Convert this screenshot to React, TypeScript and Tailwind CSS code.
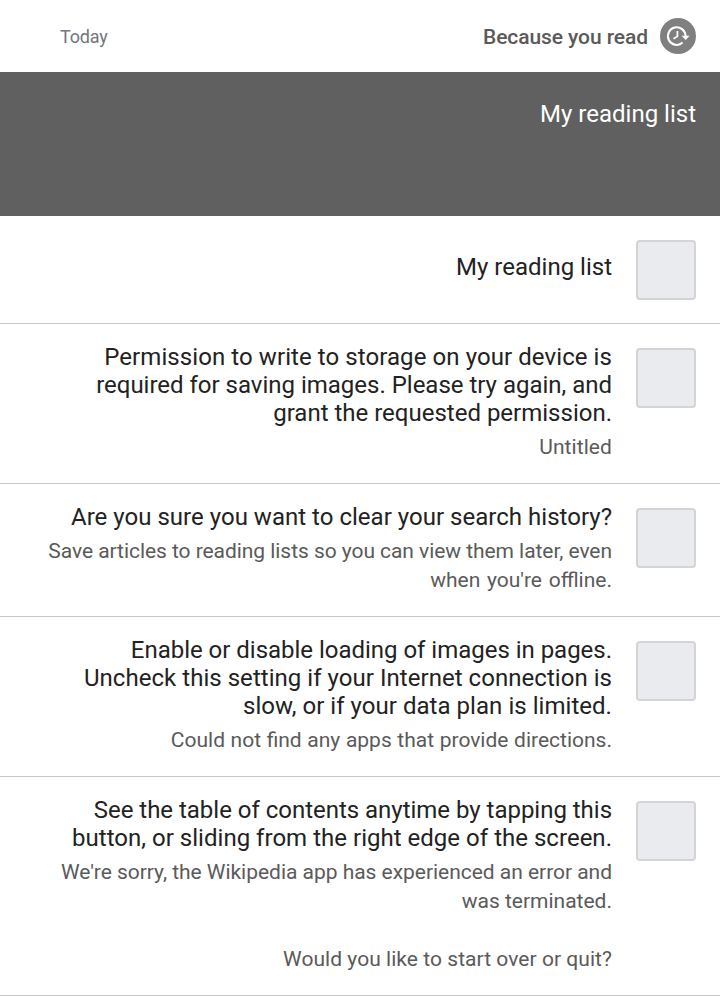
import React from "react";

type Line = [text: string, spacing: string];
type Item = { height: string; title: Line[]; details: Line[] };

const items: Item[] = [
  {
    height: "h-[108px] pt-[37px]",
    title: [["My reading list", ""]],
    details: [],
  },
  {
    height: "h-[160px] pt-[19px]",
    title: [
      ["Permission to write to storage on your device is", "tracking-[0.08px]"],
      ["required for saving images. Please try again, and", "tracking-[-0.01px]"],
      ["grant the requested permission.", ""],
    ],
    details: [["Untitled", "tracking-[0.08px]"]],
  },
  {
    height: "h-[133px] pt-[19px]",
    title: [["Are you sure you want to clear your search history?", "tracking-[0.02px]"]],
    details: [
      ["Save articles to reading lists so you can view them later, even", "tracking-[-0.056px]"],
      ["when you're offline.", "[word-spacing:1.5px]"],
    ],
  },
  {
    height: "h-[160px] pt-[19px]",
    title: [
      ["Enable or disable loading of images in pages.", "tracking-[-0.02px]"],
      ["Uncheck this setting if your Internet connection is", "tracking-[0.04px]"],
      ["slow, or if your data plan is limited.", "tracking-[0.04px]"],
    ],
    details: [["Could not find any apps that provide directions.", "[word-spacing:0.4px]"]],
  },
  {
    height: "h-[219px] pt-[19px]",
    title: [
      ["See the table of contents anytime by tapping this", "tracking-[-0.02px]"],
      ["button, or sliding from the right edge of the screen.", "tracking-[0.02px]"],
    ],
    details: [
      ["We're sorry, the Wikipedia app has experienced an error and", "tracking-[-0.03px]"],
      ["was terminated.", ""],
      ["\u00a0", ""],
      ["Would you like to start over or quit?", "tracking-[0.045px]"],
    ],
  },
];

function Lines({ lines }: { lines: Line[] }) {
  return lines.map(([text, spacing]) => (
    <span key={text} className={`block ${spacing}`}>{text}</span>
  ));
}

export default function App() {
  return (
    <main className="h-[996px] w-[720px] overflow-hidden bg-white font-['Roboto',sans-serif]">
      <header className="flex h-[72px] items-center pl-[60px] pr-6">
        <span className="text-[18px] tracking-[-0.2px] text-[#72777d]">Today</span>
        <span className="ml-auto mr-3 pt-[2px] text-[21px] leading-[30px] font-medium tracking-[-0.08px] text-[#5a5a5a]">Because you read</span>
        <svg className="size-9" viewBox="0 0 36 36" fill="none">
          <circle cx="18" cy="18" r="18" fill="#808080" />
          <path d="M22.6 24.6A8.8 8.8 0 1 1 25.5 18" stroke="white" strokeWidth="2" />
          <path d="M21.6 17.8h8l-4 4.2z" fill="white" />
          <path d="M17.4 13v5.4l-3.9 2.4" stroke="white" strokeWidth="1.7" />
        </svg>
      </header>
      <section className="flex h-36 justify-end bg-[#606060] pr-6 pt-7">
        <h1 className="text-[24px] leading-7 text-white">My reading list</h1>
      </section>
      {items.map((item) => (
        <article key={item.title[0][0]} className={`flex justify-end gap-6 border-b border-[#c8c8c8] pr-6 ${item.height}`}>
          <div className="text-right whitespace-nowrap">
            <h2 className="text-[24px] font-normal leading-7 text-[#222]"><Lines lines={item.title} /></h2>
            <p className="mt-[6px] text-[21px] leading-[29px] text-[#5a5a5a]"><Lines lines={item.details} /></p>
          </div>
          <div className={`size-[60px] shrink-0 rounded-[4px] border-2 border-[#d2d4d6] bg-[#eaebef] ${item.details.length ? "mt-[5px]" : "-mt-[13px]"}`} />
        </article>
      ))}
    </main>
  );
}
